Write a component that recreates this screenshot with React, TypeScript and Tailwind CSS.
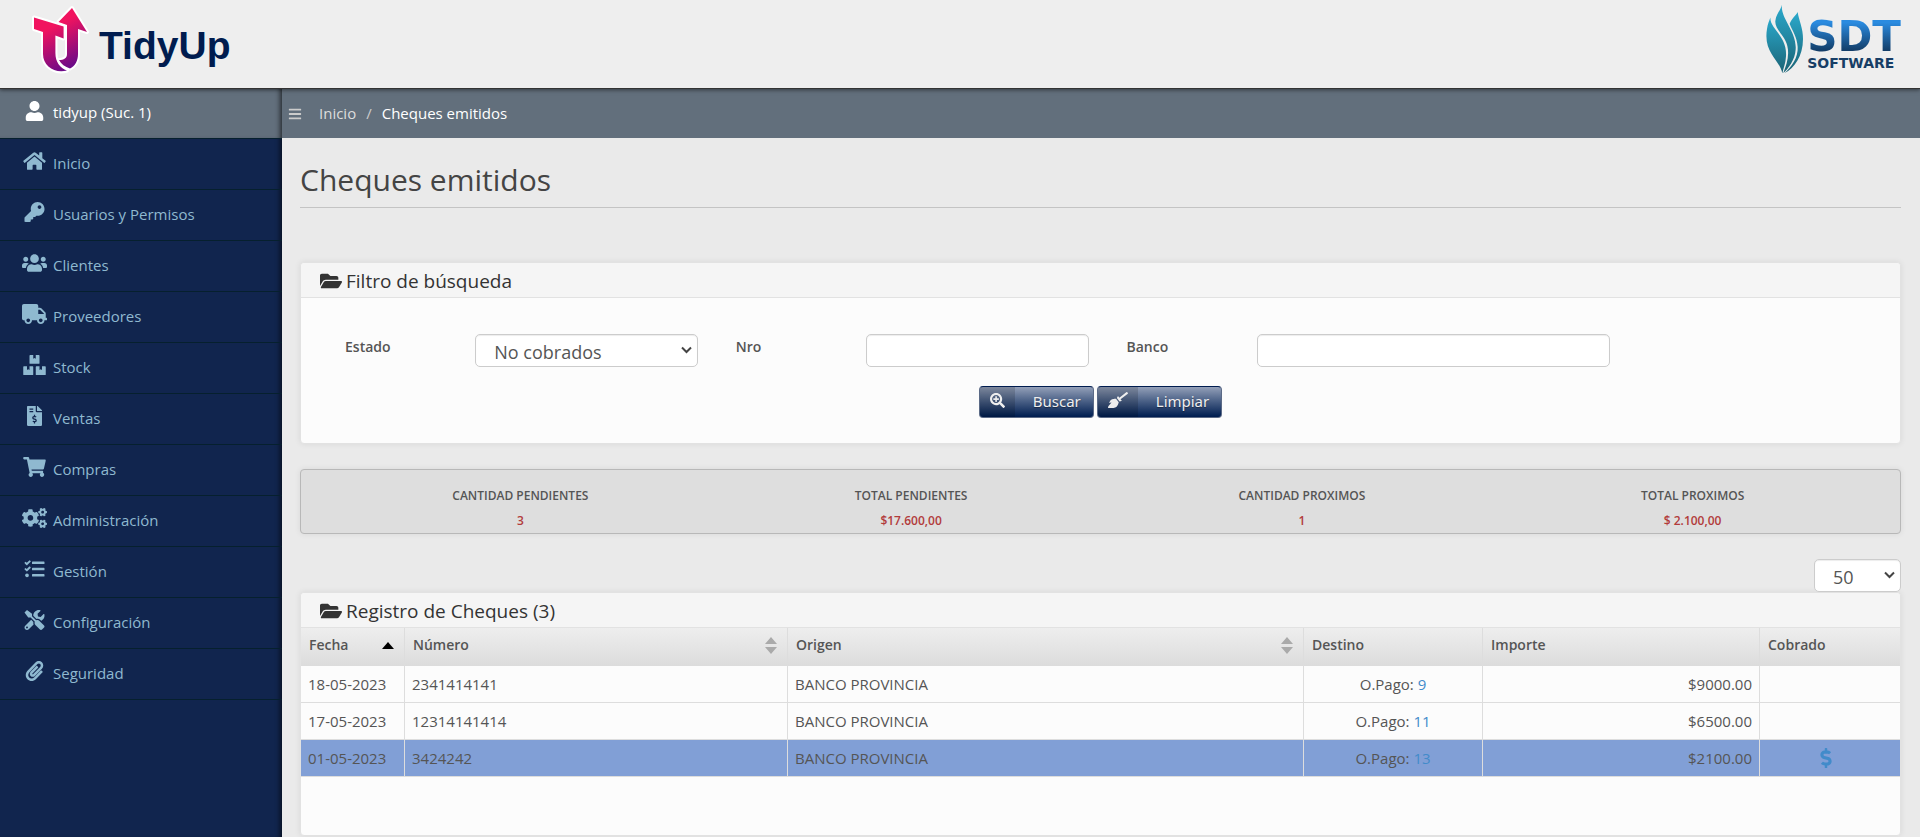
import type { ComponentProps, ReactNode } from 'react';
import {
  FaBars,
  FaBoxes,
  FaBroom,
  FaCogs,
  FaDollarSign,
  FaFileInvoiceDollar,
  FaFolderOpen,
  FaHome,
  FaKey,
  FaPaperclip,
  FaSearchPlus,
  FaShoppingCart,
  FaTasks,
  FaTools,
  FaTruck,
  FaUser,
  FaUsers,
} from 'react-icons/fa';

const menu = [
  { label: 'Inicio', icon: FaHome },
  { label: 'Usuarios y Permisos', icon: FaKey },
  { label: 'Clientes', icon: FaUsers },
  { label: 'Proveedores', icon: FaTruck },
  { label: 'Stock', icon: FaBoxes },
  { label: 'Ventas', icon: FaFileInvoiceDollar },
  { label: 'Compras', icon: FaShoppingCart },
  { label: 'Administración', icon: FaCogs },
  { label: 'Gestión', icon: FaTasks },
  { label: 'Configuración', icon: FaTools },
  { label: 'Seguridad', icon: FaPaperclip },
];

const totals = [
  { label: 'CANTIDAD PENDIENTES', value: '3' },
  { label: 'TOTAL PENDIENTES', value: '$17.600,00' },
  { label: 'CANTIDAD PROXIMOS', value: '1' },
  { label: 'TOTAL PROXIMOS', value: '$ 2.100,00' },
];

const cheques = [
  { fecha: '18-05-2023', numero: '2341414141', origen: 'BANCO PROVINCIA', pago: '9', importe: '$9000.00', proximo: false },
  { fecha: '17-05-2023', numero: '12314141414', origen: 'BANCO PROVINCIA', pago: '11', importe: '$6500.00', proximo: false },
  { fecha: '01-05-2023', numero: '3424242', origen: 'BANCO PROVINCIA', pago: '13', importe: '$2100.00', proximo: true },
];

const field = 'block h-[33px] w-full rounded-[5px] border border-[#ccc] bg-white text-lg text-[#555] shadow-[inset_0_1px_1px_rgba(0,0,0,0.075)]';
const fieldLabel = 'px-4 text-sm leading-[26px] font-semibold text-[#555]';

function TidyUpLogo() {
  return (
    <a href="#" className="flex items-end">
      <svg width="62" height="74" viewBox="30 3 62 74" aria-hidden="true">
        <defs>
          <linearGradient id="tidy" gradientUnits="userSpaceOnUse" x1="52" y1="22" x2="76" y2="70">
            <stop offset="0.1" stopColor="#f1135f" />
            <stop offset="1" stopColor="#5f0a8c" />
          </linearGradient>
        </defs>
        <g stroke="#fff" strokeWidth="4" strokeLinejoin="round" paintOrder="stroke" fill="url(#tidy)">
          <path d="M72 9 87 33 78 30V55C78 62 75 67 70 69.500C65 68 61 65 59 61C64 61 67 59 67 55V26L58.500 23Z" />
          <path d="M34 18.500 63.600 27.500V39.500L55.400 36.500V54C55.400 63 60 69 67 71.500C55 75 43 67 43 55V33L34 30Z" />
        </g>
      </svg>
      <span className="ml-[7px] font-['Liberation_Sans',sans-serif] text-[39px] leading-[60px] font-bold text-[#001c4f]">TidyUp</span>
    </a>
  );
}

function SdtLogo() {
  return (
    <a href="#" className="flex items-end gap-[3px]">
      <svg width="38" height="70" viewBox="191 14 114 202" preserveAspectRatio="none" aria-hidden="true">
        <defs>
          <linearGradient id="flame" x1="0" y1="0" x2="0" y2="1">
            <stop offset="0" stopColor="#2aa9cc" />
            <stop offset="1" stopColor="#1b6375" />
          </linearGradient>
        </defs>
        <g fill="url(#flame)">
          <path d="M204 53C203 88 255 105 251 165C250 185 243 200 240 214C233 175 182 155 194 86C196 72 201 62 204 53Z" />
          <path d="M239 16C233 55 284 92 280 145C278 175 258 200 243 213C252 190 262 165 255 135C248 105 217 88 219 63C221 43 234 34 239 16Z" />
          <path d="M286 37C289 60 303 85 302 115C302 165 275 200 247 213C268 195 288 168 286 138C284 108 270 92 262 71C268 56 280 48 286 37Z" />
        </g>
      </svg>
      <span className="flex flex-col pb-[3px] font-['DejaVu_Sans',sans-serif] font-bold">
        <span className="bg-linear-to-b from-[#2a8be0] from-10% to-[#123c66] to-90% bg-clip-text text-[42px] leading-9 text-transparent">SDT</span>
        <span className="text-sm leading-4 text-[#173e66]">SOFTWARE</span>
      </span>
    </a>
  );
}

function PanelTitle({ children }: { children: ReactNode }) {
  return (
    <h2 className="flex h-[35px] items-center gap-1 rounded-t border-b border-[#e2e2e2] bg-[#f5f5f5] pt-0.5 pl-[19px] text-[19px] text-[#333]">
      <FaFolderOpen size={22} />
      {children}
    </h2>
  );
}

function Select(props: ComponentProps<'select'>) {
  return (
    <div className="relative">
      <select {...props} className={`${field} appearance-none pt-0.5 pl-[18px]`} />
      <svg width="11" height="8" viewBox="0 0 11 8" aria-hidden="true" className="pointer-events-none absolute top-3 right-1.5">
        <path d="M1 1.500 5.500 6 10 1.500" fill="none" stroke="#444" strokeWidth="2" />
      </svg>
    </div>
  );
}

function SortIcon({ active = false }: { active?: boolean }) {
  return active ? (
    <svg width="12" height="7" viewBox="0 0 12 7" aria-hidden="true">
      <path d="M0 7 6 0 12 7Z" fill="#000" />
    </svg>
  ) : (
    <svg width="12" height="17" viewBox="0 0 12 17" aria-hidden="true">
      <path d="M0 7 6 0 12 7ZM0 10H12L6 17Z" fill="#aaa" />
    </svg>
  );
}

function ActionButton({ icon, type, children }: { icon: ReactNode; type: 'submit' | 'reset'; children: ReactNode }) {
  return (
    <button
      type={type}
      className="flex h-8 items-stretch overflow-hidden rounded border border-[#5b6a86] border-t-[#001c4f] bg-linear-to-b from-[#94a0b8] to-[#001c4f] font-['Noto_Sans',sans-serif] text-[15px] text-[#eee] [text-shadow:0_1px_1px_rgba(0,0,0,0.4)]"
    >
      <span className="flex items-center justify-center bg-black/15 px-2.5 pb-1">{icon}</span>
      <span className="self-center pr-3 pb-0.5 pl-[18px]">{children}</span>
    </button>
  );
}

function Header() {
  return (
    <header className="relative z-10 flex h-[89px] items-center justify-between border-b border-[#333] bg-[#eee] pr-[19px] pb-2.5 pl-[30px] shadow-[0_1px_4px_rgba(0,0,0,0.5)]">
      <TidyUpLogo />
      <SdtLogo />
    </header>
  );
}

function Sidebar() {
  return (
    <aside className="w-[282px] shrink-0 bg-[#11254e] text-[15px] shadow-[inset_-5px_0_5px_-3px_rgba(0,0,0,0.6)]">
      <div className="flex h-[49px] items-center bg-[#626f7c] pb-0.5 pl-[22px] text-white shadow-[inset_-5px_0_5px_-3px_rgba(0,0,0,0.6)]">
        <FaUser className="mb-1 h-5 w-[25px]" />
        <span className="ml-1.5">tidyup (Suc. 1)</span>
      </div>
      <nav className="border-t border-[#06202e]">
        {menu.map(({ label, icon: Icon }) => (
          <a key={label} href="#" className="flex h-[51px] items-center border-b border-[#06202e] pb-0.5 pl-[22px] text-[#8fb9d0]">
            <Icon className="mb-1 h-5 w-[25px]" />
            <span className="ml-1.5">{label}</span>
          </a>
        ))}
      </nav>
    </aside>
  );
}

function Filters() {
  return (
    <section className="mt-[54px] rounded border border-[#e2e2e2] bg-[#fcfcfc] shadow-[0_0_6px_rgba(0,0,0,0.08)]">
      <PanelTitle>Filtro de búsqueda</PanelTitle>
      <form className="pt-9 pb-[25px]">
        <div className="grid grid-cols-12 pr-2 pl-7">
          <label htmlFor="estado" className={fieldLabel}>Estado</label>
          <div className="col-span-2 pr-[22px] pl-4">
            <Select id="estado">
              <option>No cobrados</option>
            </Select>
          </div>
          <label htmlFor="nro" className={fieldLabel}>Nro</label>
          <div className="col-span-2 pr-[22px] pl-4">
            <input id="nro" type="text" className={`${field} px-3`} />
          </div>
          <label htmlFor="banco" className={fieldLabel}>Banco</label>
          <div className="col-span-3 pr-[22px] pl-4">
            <input id="banco" type="text" className={`${field} px-3`} />
          </div>
        </div>
        <div className="mt-[19px] flex justify-center gap-[3px]">
          <ActionButton type="submit" icon={<FaSearchPlus size={15} />}>Buscar</ActionButton>
          <ActionButton type="reset" icon={<FaBroom size={20} />}>Limpiar</ActionButton>
        </div>
      </form>
    </section>
  );
}

function Totals() {
  return (
    <dl className="mt-[25px] grid h-[65px] grid-cols-4 rounded border border-[#b8b8b8] bg-[#dedede] pt-[13px] pr-3 pl-6 text-center text-xs leading-[25px] font-semibold shadow-[0_0_6px_rgba(0,0,0,0.08)]">
      {totals.map((t) => (
        <div key={t.label}>
          <dt className="text-[#555]">{t.label}</dt>
          <dd className="text-[#b23b3b]">{t.value}</dd>
        </div>
      ))}
    </dl>
  );
}

function ChequesTable() {
  const th = 'border-r border-[#ddd] px-2 pb-1 text-left text-sm font-semibold text-[#555] last:border-r-0';
  const td = 'border-r border-b border-[#ddd] px-[7px] last:border-r-0';

  return (
    <section className="rounded border border-[#e2e2e2] bg-[#fcfcfc] pb-[58px] shadow-[0_0_6px_rgba(0,0,0,0.08)]">
      <PanelTitle>Registro de Cheques (3)</PanelTitle>
      <table className="w-full table-fixed border-separate border-spacing-0 text-[15px] text-[#555]">
        <colgroup>
          <col className="w-[104px]" />
          <col className="w-[383px]" />
          <col />
          <col className="w-[179px]" />
          <col className="w-[277px]" />
          <col className="w-[140px]" />
        </colgroup>
        <thead>
          <tr className="h-[38px] bg-linear-to-b from-[#eee] to-[#dcdcdc]">
            <th className={th}>
              <span className="flex items-center justify-between pr-0.5">Fecha <SortIcon active /></span>
            </th>
            <th className={th}>
              <span className="flex items-center justify-between pr-0.5">Número <SortIcon /></span>
            </th>
            <th className={th}>
              <span className="flex items-center justify-between pr-0.5">Origen <SortIcon /></span>
            </th>
            <th className={th}>Destino</th>
            <th className={th}>Importe</th>
            <th className={th}>Cobrado</th>
          </tr>
        </thead>
        <tbody>
          {cheques.map((c) => (
            <tr key={c.numero} className={c.proximo ? 'h-[37px] bg-[#819fd6]' : 'h-[37px]'}>
              <td className={td}>{c.fecha}</td>
              <td className={td}>{c.numero}</td>
              <td className={td}>{c.origen}</td>
              <td className={`${td} text-center`}>
                O.Pago: <a href="#" className="text-[#428bca]">{c.pago}</a>
              </td>
              <td className={`${td} text-right`}>{c.importe}</td>
              <td className={td}>
                {c.proximo && (
                  <a href="#" aria-label="Cobrar" className="flex justify-center pr-2 text-[#428bca]">
                    <FaDollarSign size={20} />
                  </a>
                )}
              </td>
            </tr>
          ))}
        </tbody>
      </table>
    </section>
  );
}

export default function App() {
  return (
    <div className="flex min-h-screen flex-col bg-[#eaeaea] font-['Open_Sans',sans-serif]">
      <Header />
      <div className="flex flex-1">
        <Sidebar />
        <div className="min-w-0 flex-1">
          <div className="flex h-[49px] items-center bg-[#626f7c] pl-1.5 text-[15px] text-white">
            <button type="button" aria-label="Menú" className="text-[#ccc]">
              <FaBars size={14} />
            </button>
            <nav className="ml-[17px] flex gap-2.5">
              <a href="#" className="text-[#ddd]">Inicio</a>
              <span className="text-[#ccc]">/</span>
              <span>Cheques emitidos</span>
            </nav>
          </div>
          <main className="pr-[19px] pl-[18px]">
            <h1 className="border-b border-[#c4c4c4] pt-[22px] pb-2 text-[30px] leading-[39px] text-[#444]">Cheques emitidos</h1>
            <Filters />
            <Totals />
            <div className="mt-[25px] flex justify-end">
              <div className="w-[87px]">
                <Select aria-label="Registros por página">
                  <option>50</option>
                </Select>
              </div>
            </div>
            <ChequesTable />
          </main>
        </div>
      </div>
    </div>
  );
}
